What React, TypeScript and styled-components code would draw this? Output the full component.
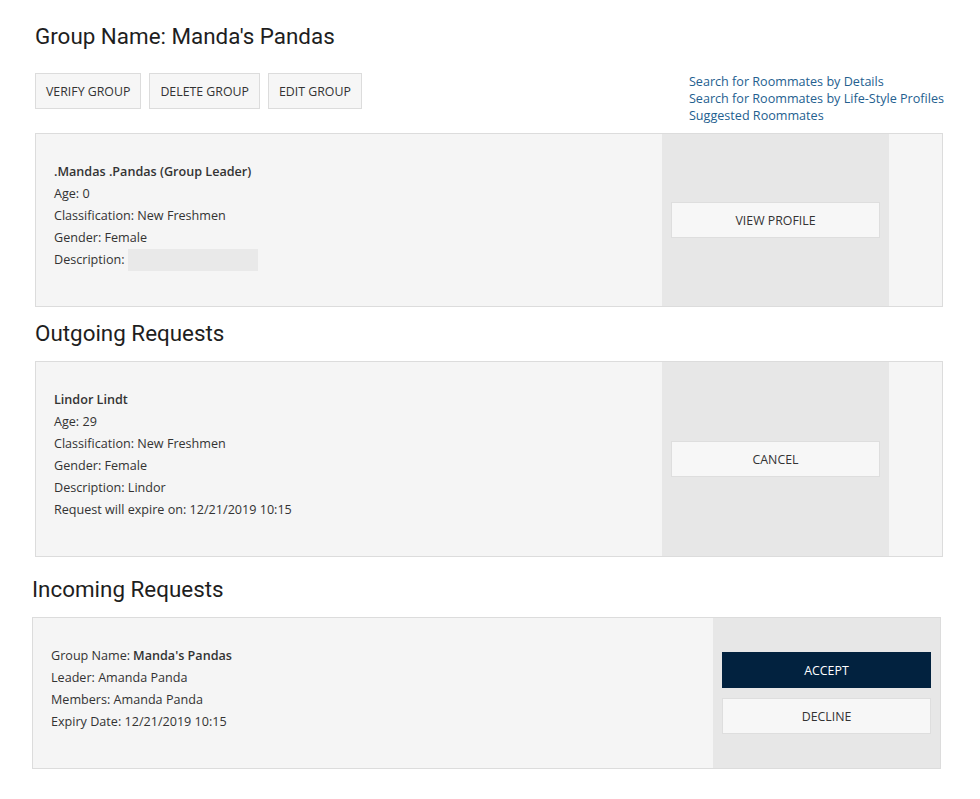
import styled, { createGlobalStyle } from "styled-components";

const GlobalStyle = createGlobalStyle`
    body {
        margin: 0;
        background: #ffffff;
        font-family: "Open Sans", "Liberation Sans", sans-serif;
        color: #333333;
    }
`

interface Member {
    name: string;
    age: number;
    classification: string;
    gender: string;
    description?: string;
    expires?: string;
}

const leader: Member = {
    name: ".Mandas .Pandas (Group Leader)",
    age: 0,
    classification: "New Freshmen",
    gender: "Female",
};

const outgoing: Member = {
    name: "Lindor Lindt",
    age: 29,
    classification: "New Freshmen",
    gender: "Female",
    description: "Lindor",
    expires: "12/21/2019 10:15",
};

function MemberInfo({ member }: { member: Member }) {
    return (
        <Info>
            <Line><b>{member.name}</b></Line>
            <Line>Age: {member.age}</Line>
            <Line>Classification: {member.classification}</Line>
            <Line>Gender: {member.gender}</Line>
            {member.description
                ? <Line>Description: {member.description}</Line>
                : <Line>Description: <EmptyField /></Line>}
            {member.expires && <Line>Request will expire on: {member.expires}</Line>}
        </Info>
    )
}

export default function App() {
    return (
        <Page>
            <GlobalStyle />
            <Heading>Group Name: Manda's Pandas</Heading>
            <Toolbar>
                <Actions>
                    <ToolButton>VERIFY GROUP</ToolButton>
                    <ToolButton>DELETE GROUP</ToolButton>
                    <ToolButton>EDIT GROUP</ToolButton>
                </Actions>
                <Links>
                    <Link href="#">Search for Roommates by Details</Link>
                    <Link href="#">Search for Roommates by Life-Style Profiles</Link>
                    <Link href="#">Suggested Roommates</Link>
                </Links>
            </Toolbar>

            <Card columns="1fr 227px 53px">
                <MemberInfo member={leader} />
                <Side>
                    <ActionButton>VIEW PROFILE</ActionButton>
                </Side>
                <div />
            </Card>

            <SectionTitle>Outgoing Requests</SectionTitle>
            <Card columns="1fr 227px 53px">
                <MemberInfo member={outgoing} />
                <Side>
                    <ActionButton>CANCEL</ActionButton>
                </Side>
                <div />
            </Card>

            <Shifted>
                <SectionTitle>Incoming Requests</SectionTitle>
                <Card columns="1fr 227px">
                    <Info>
                        <Line>Group Name: <b>Manda's Pandas</b></Line>
                        <Line>Leader: Amanda Panda</Line>
                        <Line>Members: Amanda Panda</Line>
                        <Line>Expiry Date: 12/21/2019 10:15</Line>
                    </Info>
                    <Side>
                        <ActionButton primary>ACCEPT</ActionButton>
                        <ActionButton>DECLINE</ActionButton>
                    </Side>
                </Card>
            </Shifted>
        </Page>
    )
};

const Page = styled.div`
    width: 908px;
    padding: 22px 0 30px 35px;
`

const Heading = styled.h1`
    margin: 0;
    font-family: Roboto, "Liberation Sans", sans-serif;
    font-weight: 400;
    font-size: 22.4px;
    line-height: 28px;
    color: #1e1e1e;
`

const SectionTitle = styled(Heading)`
    margin: 12px 0 14px;
`

const Toolbar = styled.div`
    display: flex;
    justify-content: space-between;
    align-items: flex-start;
    margin: 23px 0 9px;
`

const Actions = styled.div`
    display: flex;
    gap: 8px;
`

const ToolButton = styled.button`
    height: 36px;
    padding: 0 10px;
    background: #f6f6f6;
    border: 1px solid #dcdcdc;
    font-family: "Open Sans", "Liberation Sans", sans-serif;
    font-size: 12.35px;
    color: #333333;
`

const Links = styled.div`
    display: flex;
    flex-direction: column;
    font-size: 12.6px;
    line-height: 17px;
    margin-right: -1px;
`

const Link = styled.a`
    color: #24608f;
    text-decoration: none;
`

const Card = styled.div<{ columns: string }>`
    display: grid;
    grid-template-columns: ${props => props.columns};
    background: #f5f5f5;
    border: 1px solid #dcdcdc;
`

const Info = styled.div`
    padding: 27px 18px 35px;
    font-size: 12.6px;
    line-height: 22px;

    b {
        font-weight: 600;
    }
`

const Line = styled.div`
    display: flex;
    align-items: center;
    gap: 3px;
`

const EmptyField = styled.span`
    display: inline-block;
    width: 130px;
    height: 22px;
    background: #e9e9e9;
`

const Side = styled.div`
    display: flex;
    flex-direction: column;
    justify-content: center;
    gap: 10px;
    padding: 0 9px;
    background: #e7e7e7;
`

const ActionButton = styled.button<{ primary?: boolean }>`
    height: 36px;
    background: ${props => props.primary ? "#02223f" : "#f7f7f7"};
    color: ${props => props.primary ? "#ffffff" : "#333333"};
    border: 1px solid ${props => props.primary ? "#02223f" : "#dedede"};
    font-family: "Open Sans", "Liberation Sans", sans-serif;
    font-size: 12.35px;
`

const Shifted = styled.div`
    width: 909px;
    margin-left: -3px;
    margin-top: 18px;
`
